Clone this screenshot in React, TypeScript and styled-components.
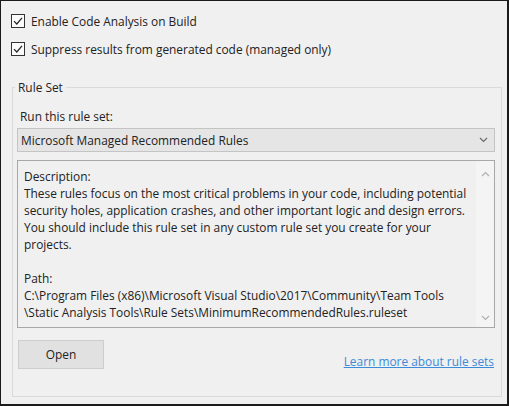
import styled, { createGlobalStyle } from 'styled-components';

const GlobalStyle = createGlobalStyle`
  html, body {
    margin: 0;
    padding: 0;
    background: #1b1b1b;
  }
  * {
    box-sizing: border-box;
  }
`;

const Frame = styled.div`
  width: 509px;
  height: 406px;
  background-color: #f0f0f0;
  border: 1px solid #1b1b1b;
  border-right-width: 2px;
  border-bottom-width: 2px;
  padding: 10px 5px 0 10px;
  font-family: 'Open Sans', 'Noto Sans', sans-serif;
  font-size: 11.9px;
  line-height: 17px;
  color: #222;
  display: flex;
  flex-direction: column;
`;

const CheckList = styled.div`
  display: flex;
  flex-direction: column;
  gap: 8px;
`;

const CheckRow = styled.label`
  display: flex;
  align-items: center;
  gap: 6px;
  height: 20px;
`;

const CheckBox = styled.span`
  width: 14px;
  height: 14px;
  border: 1px solid #333;
  background-color: #fbfbfb;
  display: flex;
  align-items: center;
  justify-content: center;
`;

const Group = styled.fieldset`
  margin: 20px 0 0 1px;
  padding: 0 6px 0 4px;
  border: 1px solid #dadada;
  height: 318px;
  display: flex;
  flex-direction: column;
  min-width: 0;
`;

const Legend = styled.legend`
  padding: 0 3px;
  margin-left: -2px;
  line-height: 17px;
`;

const FieldLabel = styled.div`
  padding: 12px 0 0 3px;
`;

const Dropdown = styled.div`
  margin-top: 3px;
  height: 24px;
  background-color: #e5e5e5;
  border: 1px solid #c4c4c4;
  display: flex;
  align-items: center;
  justify-content: space-between;
  padding: 0 6px 0 3px;
`;

const TextArea = styled.div`
  margin-top: 8px;
  height: 168px;
  border: 1px solid #a8a8a8;
  display: flex;
`;

const TextBody = styled.div`
  flex: 1;
  padding: 7px 0 0 6px;
  white-space: pre;
  overflow: hidden;
`;

const ScrollBar = styled.div`
  width: 18px;
  display: flex;
  flex-direction: column;
  align-items: center;
  padding: 10px 0 6px;
  background-color: #f4f4f4;
`;

const ScrollThumb = styled.div`
  flex: 1;
`;

const Footer = styled.div`
  margin-top: 12px;
  display: flex;
  justify-content: space-between;
  align-items: flex-end;
`;

const Button = styled.button`
  width: 86px;
  height: 29px;
  margin-left: 1px;
  background-color: #e1e1e1;
  border: 1px solid #cdcdcd;
  font: inherit;
  color: #222;
  padding: 0;
`;

const HelpLink = styled.a`
  color: #3c8bd9;
  text-decoration: underline;
  margin-right: 1px;
  margin-bottom: -1px;
  cursor: pointer;
`;

const Check = () => (
  <svg width="10" height="10" viewBox="0 0 10 10">
    <path d="M1 5.2 L3.8 8 L9 1.8" fill="none" stroke="#222" strokeWidth="1.2" />
  </svg>
);

const Chevron = ({ up, color }: { up?: boolean; color: string }) => (
  <svg width="9" height="6" viewBox="0 0 9 6">
    <path
      d={up ? 'M1 5 L4.5 1.5 L8 5' : 'M1 1 L4.5 4.5 L8 1'}
      fill="none"
      stroke={color}
      strokeWidth="1.2"
    />
  </svg>
);

const description = [
  'Description:',
  'These rules focus on the most critical problems in your code, including potential',
  'security holes, application crashes, and other important logic and design errors.',
  'You should include this rule set in any custom rule set you create for your',
  'projects.',
  '',
  'Path:',
  'C:\\Program Files (x86)\\Microsoft Visual Studio\\2017\\Community\\Team Tools',
  '\\Static Analysis Tools\\Rule Sets\\MinimumRecommendedRules.ruleset',
].join('\n');

const App = () => {
  return (
    <>
      <GlobalStyle />
      <Frame>
        <CheckList>
          <CheckRow>
            <CheckBox>
              <Check />
            </CheckBox>
            Enable Code Analysis on Build
          </CheckRow>
          <CheckRow>
            <CheckBox>
              <Check />
            </CheckBox>
            Suppress results from generated code (managed only)
          </CheckRow>
        </CheckList>

        <Group>
          <Legend>Rule Set</Legend>
          <FieldLabel>Run this rule set:</FieldLabel>
          <Dropdown>
            <span>Microsoft Managed Recommended Rules</span>
            <Chevron color="#6a6a6a" />
          </Dropdown>
          <TextArea>
            <TextBody>{description}</TextBody>
            <ScrollBar>
              <Chevron up color="#b0b0b0" />
              <ScrollThumb />
              <Chevron color="#b0b0b0" />
            </ScrollBar>
          </TextArea>
          <Footer>
            <Button>Open</Button>
            <HelpLink>Learn more about rule sets</HelpLink>
          </Footer>
        </Group>
      </Frame>
    </>
  );
};

export default App;
